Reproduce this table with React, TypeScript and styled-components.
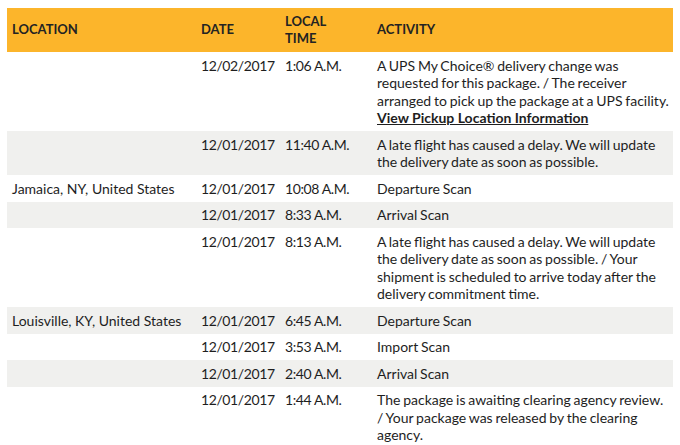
import React from "react";
import styled, { createGlobalStyle } from "styled-components";

const GlobalStyle = createGlobalStyle`
  body {
    margin: 0;
    background: #fff;
    font-family: Lato, "Open Sans", Arial, sans-serif;
  }
`;

type Activity = {
  location?: string;
  date: string;
  time: string;
  text: string;
  link?: string;
};

const rows: Activity[] = [
  {
    date: "12/02/2017",
    time: "1:06 A.M.",
    text: "A UPS My Choice® delivery change was requested for this package. / The receiver arranged to pick up the package at a UPS facility.",
    link: "View Pickup Location Information",
  },
  {
    date: "12/01/2017",
    time: "11:40 A.M.",
    text: "A late flight has caused a delay. We will update the delivery date as soon as possible.",
  },
  { location: "Jamaica, NY, United States", date: "12/01/2017", time: "10:08 A.M.", text: "Departure Scan" },
  { date: "12/01/2017", time: "8:33 A.M.", text: "Arrival Scan" },
  {
    date: "12/01/2017",
    time: "8:13 A.M.",
    text: "A late flight has caused a delay. We will update the delivery date as soon as possible. / Your shipment is scheduled to arrive today after the delivery commitment time.",
  },
  { location: "Louisville, KY, United States", date: "12/01/2017", time: "6:45 A.M.", text: "Departure Scan" },
  { date: "12/01/2017", time: "3:53 A.M.", text: "Import Scan" },
  { date: "12/01/2017", time: "2:40 A.M.", text: "Arrival Scan" },
  {
    date: "12/01/2017",
    time: "1:44 A.M.",
    text: "The package is awaiting clearing agency review. / Your package was released by the clearing agency.",
  },
];

const Page = styled.div`
  padding: 8px 7px 0 7px;
`;

const Table = styled.table`
  width: 666px;
  border-collapse: collapse;
  table-layout: fixed;
  color: #1e1e1e;
  font-size: 14px;
  line-height: 17.5px;
`;

const HeadRow = styled.tr`
  background: #fcb52b;
`;

const HeadCell = styled.th<{ $w?: number; $middle?: boolean }>`
  width: ${(p) => (p.$w ? `${p.$w}px` : "auto")};
  text-align: left;
  vertical-align: ${(p) => (p.$middle ? "middle" : "top")};
  padding: 4.5px 5px;
  font-weight: 700;
  font-size: 13px;
  color: #232323;
`;

const BodyRow = styled.tr<{ $shaded: boolean }>`
  background: ${(p) => (p.$shaded ? "#f0f0ee" : "#fff")};
`;

const Cell = styled.td`
  vertical-align: top;
  padding: 4.5px 5px;
`;

const StampCell = styled(Cell)`
  letter-spacing: -0.4px;
`;

const ActivityCell = styled(Cell)`
  padding-right: 2px;
  word-spacing: -0.8px;
`;

const PickupLink = styled.a`
  display: block;
  font-weight: 700;
  color: #1e1e1e;
  word-spacing: 0;
  text-decoration: underline;
  cursor: pointer;
`;

export default function App() {
  return (
    <Page>
      <GlobalStyle />
      <Table>
        <thead>
          <HeadRow>
            <HeadCell $w={179} $middle>LOCATION</HeadCell>
            <HeadCell $w={74} $middle>DATE</HeadCell>
            <HeadCell $w={82}>
              LOCAL
              <br />
              TIME
            </HeadCell>
            <HeadCell $middle>ACTIVITY</HeadCell>
          </HeadRow>
        </thead>
        <tbody>
          {rows.map((r, i) => (
            <BodyRow key={i} $shaded={i % 2 === 1}>
              <Cell>{r.location}</Cell>
              <StampCell>{r.date}</StampCell>
              <StampCell>{r.time}</StampCell>
              <ActivityCell>
                {r.text}
                {r.link && <PickupLink>{r.link}</PickupLink>}
              </ActivityCell>
            </BodyRow>
          ))}
        </tbody>
      </Table>
    </Page>
  );
}
